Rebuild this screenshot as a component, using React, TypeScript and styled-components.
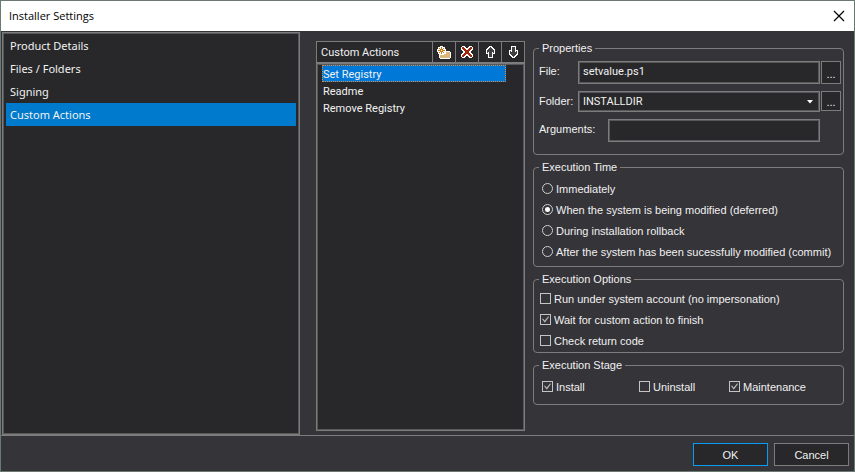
import React from "react";
import styled, { createGlobalStyle, css } from "styled-components";

const c = {
  frame: "#6b7a70",
  panel: "#353439",
  dark: "#28282a",
  line: "#7c7c7c",
  inner: "#58585a",
  text: "#f1f1f1",
  accent: "#007acc",
  select: "#0078d7",
};
const sans = '"Liberation Sans", Arial, sans-serif';
const compact = 'Roboto, "Liberation Sans", Arial, sans-serif';
const humanist = '"Noto Sans", "Open Sans", sans-serif';

const GlobalStyle = createGlobalStyle`
  *, *::before, *::after { box-sizing: border-box; }
  body { margin: 0; background: ${c.panel}; }
  button, input, select { font: inherit; color: inherit; margin: 0; }
`;

const sunken = css`
  border: 1px solid ${c.line};
  box-shadow: inset 0 0 0 1px ${c.inner};
  background: ${c.dark};
`;

const Window = styled.div`
  min-height: 100vh;
  display: flex;
  flex-direction: column;
  border: 1px solid ${c.frame};
  background: ${c.panel};
  color: ${c.text};
  font: 11px/14px ${sans};
`;

const TitleBar = styled.header`
  height: 30px;
  display: flex;
  align-items: center;
  justify-content: space-between;
  padding: 0 7px 0 8px;
  background: #fff;
  color: #000;
`;

const Title = styled.h1`
  margin: 0;
  font: 400 11px/16px "Open Sans", ${humanist};
`;

const CloseButton = styled.button`
  display: flex;
  padding: 2px;
  border: 0;
  background: none;
`;

const Body = styled.main`
  flex: 1;
  display: grid;
  grid-template-columns: 298fr 225fr 319fr;
  padding: 1px 10px 0 1px;
`;

const Nav = styled.nav`
  ${sunken}
  padding: 1px 3px;
  font: 11px/23px ${humanist};
`;

const NavLink = styled.a<{ $active?: boolean }>`
  display: block;
  padding: 0 4px;
  color: inherit;
  text-decoration: none;
  background: ${(p) => (p.$active ? c.accent : "transparent")};
`;

const Actions = styled.section`
  display: flex;
  flex-direction: column;
  padding: 9px 0 4px 16px;
  font: 11px/17px ${compact};
`;

const ActionsBar = styled.div`
  display: flex;
  gap: 1px;
  padding: 1px;
  background: ${c.line};
`;

const ActionsTitle = styled.h2`
  flex: 1;
  margin: 0;
  padding: 2px 4px 0;
  font: inherit;
  line-height: 18px;
  background: ${c.dark};
`;

const ToolButton = styled.button`
  width: 22px;
  height: 20px;
  padding: 0;
  display: flex;
  align-items: center;
  justify-content: center;
  border: 0;
  background: ${c.dark};
`;

const ActionList = styled.ul`
  ${sunken}
  flex: 1;
  margin: 0;
  padding: 1px 18px 1px 5px;
  list-style: none;
`;

const ActionItem = styled.li<{ $selected?: boolean }>`
  height: 17px;
  outline: ${(p) => (p.$selected ? "1px dotted #e08a3c" : "none")};
  outline-offset: -1px;
  background: ${(p) => (p.$selected ? c.select : "transparent")};
`;

const ActionButton = styled.button`
  display: block;
  width: 100%;
  height: 17px;
  padding: 2px 1px 0;
  border: 0;
  background: none;
  line-height: 15px;
  text-align: left;
`;

const Settings = styled.form`
  display: flex;
  flex-direction: column;
  gap: 5px;
  padding: 9px 0 0 8px;
`;

const Group = styled.fieldset`
  margin: 0;
  min-width: 0;
  border: 1px solid ${c.line};
  border-radius: 4px;
  padding: 0;
`;

const Legend = styled.legend`
  margin-left: 5px;
  padding: 0 3px;
`;

const Field = styled.div<{ $label: number }>`
  display: grid;
  grid-template-columns: ${(p) => p.$label}px 1fr 20px;
  column-gap: 1px;
  align-items: start;
`;

const Fields = styled.div`
  display: flex;
  flex-direction: column;
  gap: 7px;
  padding: 6px 2px 12px 5px;
`;

const FieldLabel = styled.label`
  padding-top: 3px;
`;

const TextBox = styled.input`
  ${sunken}
  width: 100%;
  height: 23px;
  padding: 0 4px 2px;
  border-radius: 0;
  font-family: ${compact};
`;

const SelectWrap = styled.div`
  display: grid;
  align-items: center;
  > * { grid-area: 1 / 1; }
  > svg { justify-self: end; margin-right: 7px; pointer-events: none; }
`;

const Select = styled.select`
  ${sunken}
  appearance: none;
  width: 100%;
  height: 21px;
  padding: 0 4px;
  border-radius: 0;
  font-family: ${compact};
`;

const BrowseButton = styled.button<{ $short?: boolean }>`
  height: ${(p) => (p.$short ? 20 : 23)}px;
  padding: 2px 0 0;
  border: 1px solid ${c.line};
  background: ${c.dark};
  text-align: center;
`;

const Choices = styled.div<{ $pad: string }>`
  display: flex;
  flex-direction: column;
  padding: ${(p) => p.$pad};
`;

const StageRow = styled.div`
  display: grid;
  grid-template-columns: 97fr 90fr 109fr;
  padding: 4px 5px 7px 8px;
`;

const Choice = styled.label`
  height: 21px;
  display: flex;
  align-items: center;
  gap: 3px;
  white-space: nowrap;
`;

const Radio = styled.input.attrs({ type: "radio" })`
  appearance: none;
  display: grid;
  place-items: center;
  width: 11px;
  height: 11px;
  border: 1px solid #d0d0d0;
  border-radius: 50%;
  &:checked::before {
    content: "";
    width: 5px;
    height: 5px;
    border-radius: 50%;
    background: #fff;
  }
`;

const Check = styled.input.attrs({ type: "checkbox" })`
  appearance: none;
  display: grid;
  place-items: center;
  width: 11px;
  height: 11px;
  border: 1px solid #c4c4c4;
  &:checked::before {
    content: "";
    width: 7px;
    height: 7px;
    background: #b4b4b4;
    clip-path: polygon(0 43%, 14% 36%, 38% 66%, 90% 4%, 100% 14%, 40% 96%);
  }
`;

const Footer = styled.footer`
  display: flex;
  justify-content: flex-end;
  gap: 6px;
  padding: 7px 5px 5px;
  border-top: 1px solid ${c.line};
`;

const DialogButton = styled.button<{ $primary?: boolean }>`
  width: 75px;
  height: 23px;
  padding: 0;
  border: 1px solid ${(p) => (p.$primary ? "#0a9bf5" : c.line)};
  background: ${c.dark};
`;

const CloseIcon = () => (
  <svg width="12" height="12" viewBox="0 0 12 12" aria-hidden="true">
    <path d="M1 1l10 10M11 1L1 11" stroke="#000" strokeWidth="1.2" />
  </svg>
);

const NewIcon = () => (
  <svg width="14" height="13" viewBox="0 0 14 13" shapeRendering="crispEdges" aria-hidden="true">
    <path d="M3 0h3v1h2v2h1v2h4v1h1v6h-1v1H3v-1H2V8H1V6H0V3h1V1h2z" fill="#fff" />
    <path d="M9 6h4v6H3V9h4V8h2z" fill="#dcb67a" />
    <path d="M4 1h1v2H4zM4 6h1v2H4zM1 4h2v1H1zM6 4h2v1H6zM2 2h1v1H2zM6 2h1v1H6zM2 6h1v1H2zM6 6h1v1H6z" fill="#c27d1a" />
    <path d="M3 3h3v3H3z" fill="#c27d1a" />
    <path d="M4 4h1v1H4z" fill="#fff" />
  </svg>
);

const DeleteIcon = () => (
  <svg width="12" height="12" viewBox="0 0 12 12" shapeRendering="crispEdges" aria-hidden="true">
    <path
      d="M1 0h3v1h1v1h2V1h1V0h3v1h1v3h-1v1h-1v2h1v1h1v3h-1v1H8v-1H7v-1H5v1H4v1H1v-1H0V8h1V7h1V5H1V4H0V1h1z"
      fill="#fff"
    />
    <path
      d="M1 1h2v1h1v1h1v1h2V3h1V2h1V1h2v2h-1v1H9v1H8v2h1v1h1v1h1v2H9v-1H8V9H7V8H5v1H4v1H3v1H1V9h1V8h1V7h1V5H3V4H2V3H1z"
      fill="#a1260d"
    />
  </svg>
);

const ArrowIcon = ({ down }: { down?: boolean }) => (
  <svg width="9" height="12" viewBox="0 0 9 12" shapeRendering="crispEdges" aria-hidden="true">
    <g transform={down ? "rotate(180 4.5 6)" : undefined}>
      <path d="M3 0h3v1h1v1h1v1h1v5H7v4H2V8H0V3h1V2h1V1h1z" fill="#fff" />
      <path d="M4 1h1v1h1v1h1v1h1v3H7V6H6v5H3V6H2v1H1V4h1V3h1V2h1z" fill="#424242" />
    </g>
  </svg>
);

const CaretIcon = () => (
  <svg width="7" height="4" viewBox="0 0 7 4" aria-hidden="true">
    <path d="M1 0h6L4 3.500z" fill="#fff" />
  </svg>
);

const pages = ["Product Details", "Files / Folders", "Signing", "Custom Actions"];
const actions = ["Set Registry", "Readme", "Remove Registry"];
const times = [
  "Immediately",
  "When the system is being modified (deferred)",
  "During installation rollback",
  "After the system has been sucessfully modified (commit)",
];
const options = [
  { label: "Run under system account (no impersonation)", on: false },
  { label: "Wait for custom action to finish", on: true },
  { label: "Check return code", on: false },
];
const stages = [
  { label: "Install", on: true },
  { label: "Uninstall", on: false },
  { label: "Maintenance", on: true },
];

export default function App() {
  const [selected, setSelected] = React.useState(0);
  return (
    <>
      <GlobalStyle />
      <Window>
        <TitleBar>
          <Title>Installer Settings</Title>
          <CloseButton aria-label="Close"><CloseIcon /></CloseButton>
        </TitleBar>
        <Body>
          <Nav>
            {pages.map((page) => (
              <NavLink key={page} href="#" $active={page === "Custom Actions"}>{page}</NavLink>
            ))}
          </Nav>
          <Actions>
            <ActionsBar>
              <ActionsTitle>Custom Actions</ActionsTitle>
              <ToolButton aria-label="New"><NewIcon /></ToolButton>
              <ToolButton aria-label="Delete"><DeleteIcon /></ToolButton>
              <ToolButton aria-label="Move up"><ArrowIcon /></ToolButton>
              <ToolButton aria-label="Move down"><ArrowIcon down /></ToolButton>
            </ActionsBar>
            <ActionList>
              {actions.map((action, i) => (
                <ActionItem key={action} $selected={i === selected}>
                  <ActionButton onClick={() => setSelected(i)}>{action}</ActionButton>
                </ActionItem>
              ))}
            </ActionList>
          </Actions>
          <Settings onSubmit={(e) => e.preventDefault()}>
            <Group>
              <Legend>Properties</Legend>
              <Fields>
                <Field $label={38}>
                  <FieldLabel htmlFor="file">File:</FieldLabel>
                  <TextBox id="file" defaultValue="setvalue.ps1" />
                  <BrowseButton type="button" aria-label="Browse file">...</BrowseButton>
                </Field>
                <Field $label={38}>
                  <FieldLabel htmlFor="folder">Folder:</FieldLabel>
                  <SelectWrap>
                    <Select id="folder"><option>INSTALLDIR</option></Select>
                    <CaretIcon />
                  </SelectWrap>
                  <BrowseButton type="button" $short aria-label="Browse folder">...</BrowseButton>
                </Field>
                <Field $label={68}>
                  <FieldLabel htmlFor="arguments">Arguments:</FieldLabel>
                  <TextBox id="arguments" />
                </Field>
              </Fields>
            </Group>
            <Group>
              <Legend>Execution Time</Legend>
              <Choices $pad="4px 8px">
                {times.map((time, i) => (
                  <Choice key={time}>
                    <Radio name="time" defaultChecked={i === 1} />
                    {time}
                  </Choice>
                ))}
              </Choices>
            </Group>
            <Group>
              <Legend>Execution Options</Legend>
              <Choices $pad="2px 6px 1px">
                {options.map((o) => (
                  <Choice key={o.label}><Check defaultChecked={o.on} />{o.label}</Choice>
                ))}
              </Choices>
            </Group>
            <Group>
              <Legend>Execution Stage</Legend>
              <StageRow>
                {stages.map((s) => (
                  <Choice key={s.label}><Check defaultChecked={s.on} />{s.label}</Choice>
                ))}
              </StageRow>
            </Group>
          </Settings>
        </Body>
        <Footer>
          <DialogButton $primary>OK</DialogButton>
          <DialogButton>Cancel</DialogButton>
        </Footer>
      </Window>
    </>
  );
}
